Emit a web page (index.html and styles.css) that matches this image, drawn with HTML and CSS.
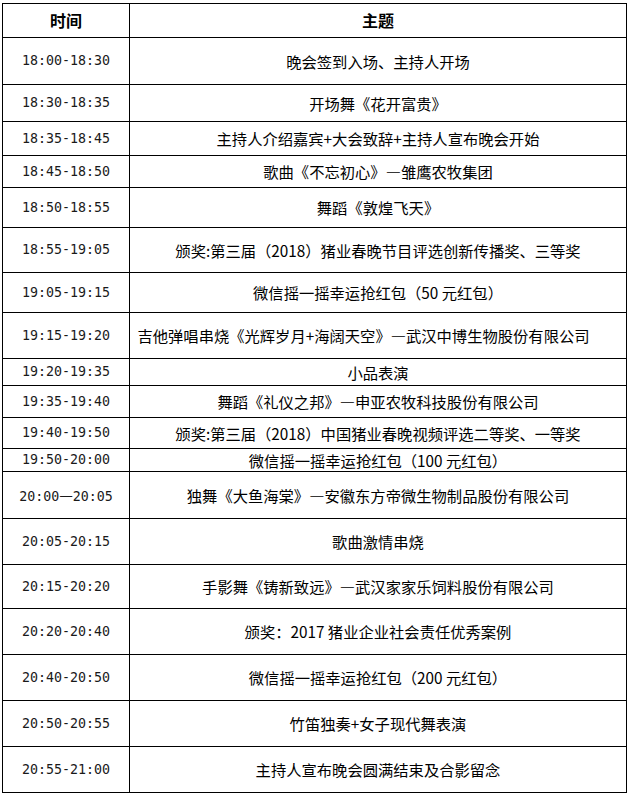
FILE: index.html
```html
<!DOCTYPE html>
<html lang="zh-CN">
<head>
<meta charset="utf-8">
<title>晚会节目单</title>
<link rel="stylesheet" href="styles.css">
</head>
<body>
<div class="schedule">
  <div class="cell head">时间</div><div class="cell head">主题</div>
  <div class="cell time">18:00-18:30</div><div class="cell topic">晚会签到入场、主持人开场</div>
  <div class="cell time">18:30-18:35</div><div class="cell topic">开场舞《花开富贵》</div>
  <div class="cell time">18:35-18:45</div><div class="cell topic">主持人介绍嘉宾+大会致辞+主持人宣布晚会开始</div>
  <div class="cell time">18:45-18:50</div><div class="cell topic">歌曲《不忘初心》—雏鹰农牧集团</div>
  <div class="cell time">18:50-18:55</div><div class="cell topic">舞蹈《敦煌飞天》</div>
  <div class="cell time">18:55-19:05</div><div class="cell topic">颁奖:第三届（2018）猪业春晚节目评选创新传播奖、三等奖</div>
  <div class="cell time">19:05-19:15</div><div class="cell topic">微信摇一摇幸运抢红包（50 元红包）</div>
  <div class="cell time">19:15-19:20</div><div class="cell topic topic-long">吉他弹唱串烧《光辉岁月+海阔天空》—武汉中博生物股份有限公司</div>
  <div class="cell time">19:20-19:35</div><div class="cell topic">小品表演</div>
  <div class="cell time">19:35-19:40</div><div class="cell topic">舞蹈《礼仪之邦》—申亚农牧科技股份有限公司</div>
  <div class="cell time">19:40-19:50</div><div class="cell topic">颁奖:第三届（2018）中国猪业春晚视频评选二等奖、一等奖</div>
  <div class="cell time">19:50-20:00</div><div class="cell topic">微信摇一摇幸运抢红包（100 元红包）</div>
  <div class="cell time"><span>20:00<span class="wide">—</span>20:05</span></div><div class="cell topic">独舞《大鱼海棠》—安徽东方帝微生物制品股份有限公司</div>
  <div class="cell time">20:05-20:15</div><div class="cell topic">歌曲激情串烧</div>
  <div class="cell time">20:15-20:20</div><div class="cell topic">手影舞《铸新致远》—武汉家家乐饲料股份有限公司</div>
  <div class="cell time">20:20-20:40</div><div class="cell topic">颁奖：2017 猪业企业社会责任优秀案例</div>
  <div class="cell time">20:40-20:50</div><div class="cell topic">微信摇一摇幸运抢红包（200 元红包）</div>
  <div class="cell time">20:50-20:55</div><div class="cell topic">竹笛独奏+女子现代舞表演</div>
  <div class="cell time">20:55-21:00</div><div class="cell topic">主持人宣布晚会圆满结束及合影留念</div>
</div>
</body>
</html>
```
FILE: styles.css
```css
html, body {
  margin: 0;
  padding: 0;
  background: #fff;
}

body {
  font-family: "Noto Sans CJK SC", sans-serif;
  color: #000;
}

.schedule {
  display: grid;
  grid-template-columns: 127px 497px;
  grid-template-rows: 34px 47px 37px 34px 32px 40px 45px 40px 46px 27px 32px 31px 23px 47px 46px 44px 46px 46px 46px 46px;
  width: max-content;
  margin: 3px 0 0 2px;
  border-top: 1px solid #000;
  border-left: 1px solid #000;
}

.cell {
  box-sizing: border-box;
  display: flex;
  align-items: center;
  justify-content: center;
  border-right: 1px solid #000;
  border-bottom: 1px solid #000;
  line-height: 1.2;
  white-space: nowrap;
  overflow: hidden;
}

.head {
  font-size: 16px;
  font-weight: 700;
  padding-top: 1px;
}

.time {
  font-family: "DejaVu Sans Mono", monospace;
  font-size: 13.3px;
  color: #1a1a1a;
}

.wide {
  font-family: "Noto Sans CJK SC", sans-serif;
  font-size: 15.3px;
}

.topic {
  font-size: 15.3px;
}

.topic-long {
  padding-right: 29px;
}
```
